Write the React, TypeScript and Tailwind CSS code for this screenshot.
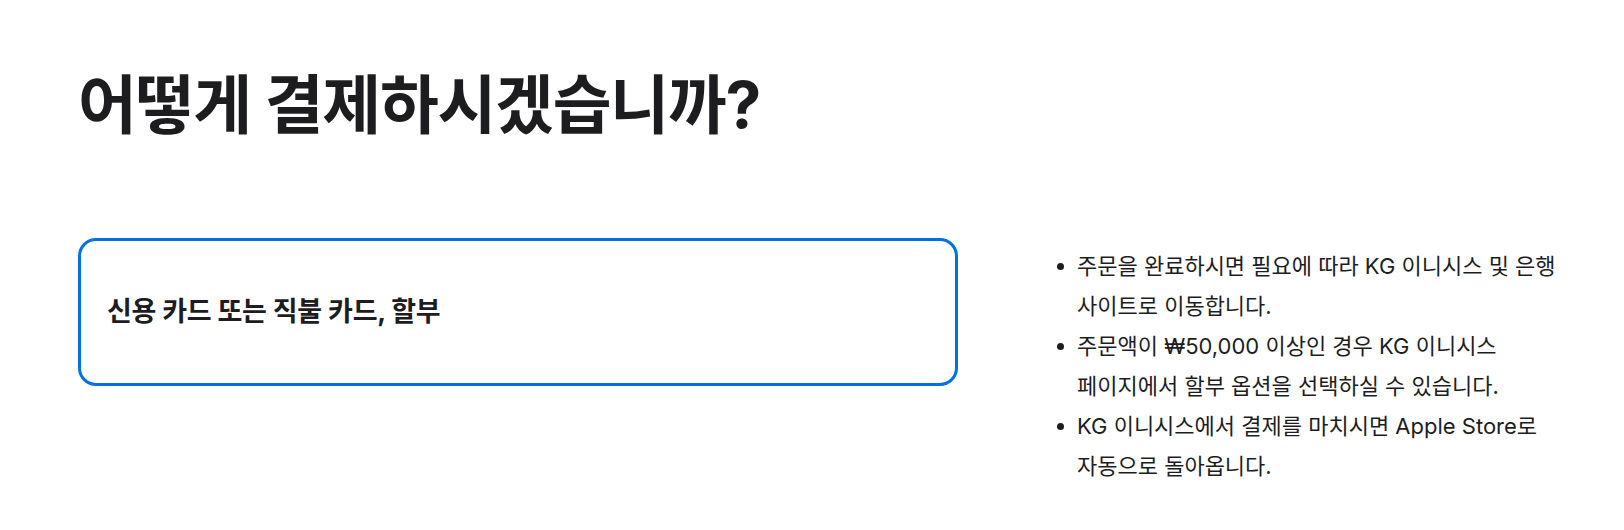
import React from 'react';

const notes = [
  '주문을 완료하시면 필요에 따라 KG 이니시스 및 은행 사이트로 이동합니다.',
  '주문액이 ₩50,000 이상인 경우 KG 이니시스 페이지에서 할부 옵션을 선택하실 수 있습니다.',
  'KG 이니시스에서 결제를 마치시면 Apple Store로 자동으로 돌아옵니다.',
];

export default function App() {
  return (
    <div
      className="w-[1624px] h-[530px] bg-white text-[#1d1d1f] overflow-hidden"
      style={{ fontFamily: 'Inter, "Noto Sans CJK KR", "Noto Sans", sans-serif' }}
    >
      <div className="pl-[78px] pt-[70px]">
        {/* Heading */}
        <h1 className="text-[64px] leading-[1.1] font-bold tracking-[-0.02em]">
          어떻게 결제하시겠습니까?
        </h1>

        <div className="mt-[98px] flex items-start">
          {/* Payment option */}
          <div className="w-[880px] h-[148px] rounded-[18px] border-[3px] border-[#0071e3] flex items-center px-[26px]">
            <span className="text-[27px] font-bold tracking-[-0.01em]">
              신용 카드 또는 직불 카드, 할부
            </span>
          </div>

          {/* Notes */}
          <ul className="ml-[99px] mt-[8px] w-[525px] text-[22px] leading-[40px] break-keep">
            {notes.map((n, i) => (
              <li key={i} className="flex">
                <span className="w-[20px] shrink-0 flex justify-start pt-[17px]">
                  <span className="block w-[7px] h-[7px] rounded-full bg-[#1d1d1f]" />
                </span>
                <span>{n}</span>
              </li>
            ))}
          </ul>
        </div>
      </div>
    </div>
  );
}
